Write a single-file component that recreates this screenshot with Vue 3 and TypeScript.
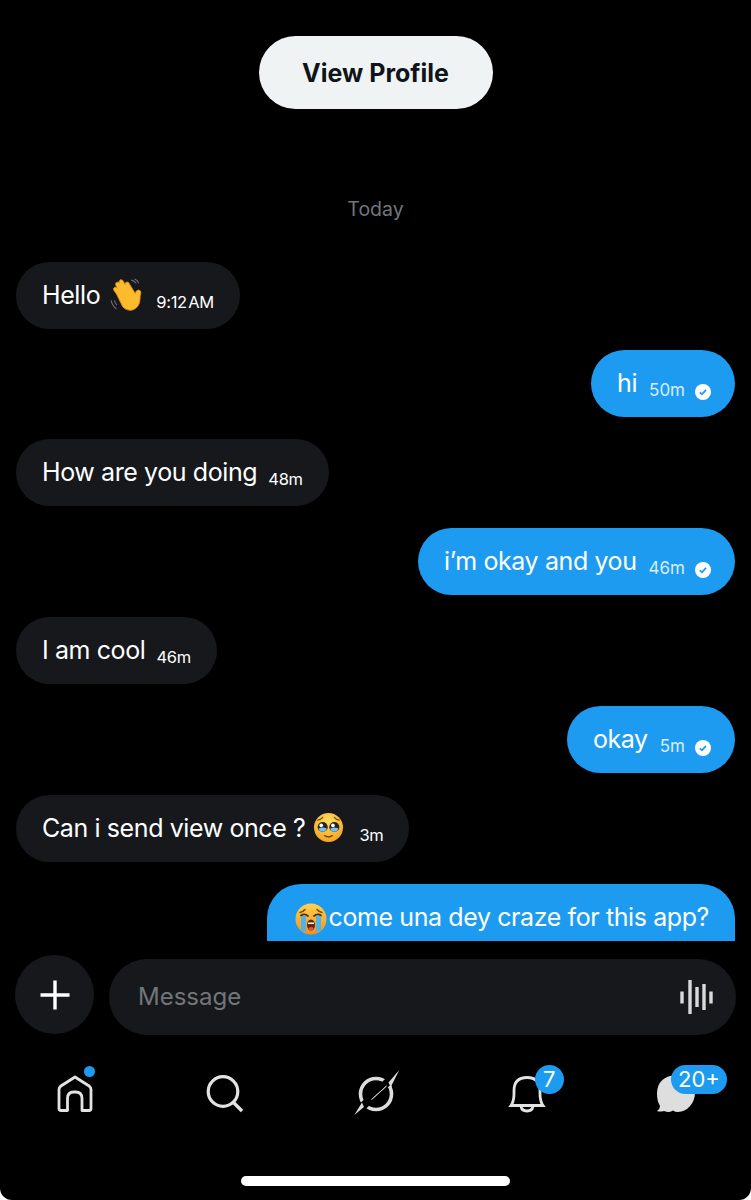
<script setup lang="ts">
type Msg = { id: number; side: 'in' | 'out'; text: string; time: string; emoji?: 'wave' | 'plead' }

const messages: Msg[] = [
  { id: 1, side: 'in', text: 'Hello', emoji: 'wave', time: '9:12 AM' },
  { id: 2, side: 'out', text: 'hi', time: '50m' },
  { id: 3, side: 'in', text: 'How are you doing', time: '48m' },
  { id: 4, side: 'out', text: 'i’m okay and you', time: '46m' },
  { id: 5, side: 'in', text: 'I am cool', time: '46m' },
  { id: 6, side: 'out', text: 'okay', time: '5m' },
  { id: 7, side: 'in', text: 'Can i send view once ?', emoji: 'plead', time: '3m' },
]
</script>

<template>
  <div class="screen">
    <div class="thread">
      <button class="profile-btn">View Profile</button>
      <div class="day">Today</div>

      <div class="messages">
        <div v-for="m in messages" :key="m.id" class="row" :class="m.side">
          <div class="bubble">
            <span class="text">{{ m.text }}</span>

            <svg v-if="m.emoji === 'wave'" class="emoji wave" viewBox="0 0 32 32">
              <path d="M2 21q1 5 5 8M5 21q.7 2.500 2.500 4.500" fill="none" stroke="#6f7378" stroke-width="1" />
              <path d="M21 2q3 .6 4.500 3M24 1q3 1 4 4" fill="none" stroke="#6f7378" stroke-width="1" />
              <path d="M7 15 4.500 11.500q-1-2 .8-2.800 1.500-.5 2.500 1L6.500 7q-1-2 .8-3 1.700-.6 2.700 1L9.500 4.500q-.5-2 1.300-2.800 1.800-.5 2.700 1.300l1.500 3q0-2 1.800-2.200 2-.2 2.400 1.800l5.500 9q.5-3 3-3.300 2.500.2 2.300 3-1 3-.8 6-.5 7-6.200 9.500-5.500 2-10-2.500z" fill="#fdbb2d" stroke="#d98a10" stroke-width=".8" />
            </svg>
            <svg v-if="m.emoji === 'plead'" class="emoji plead" viewBox="0 0 32 32">
              <defs>
                <radialGradient id="face" cx=".5" cy=".3" r=".8">
                  <stop offset="0" stop-color="#ffdf5e" />
                  <stop offset="1" stop-color="#f59a1c" />
                </radialGradient>
              </defs>
              <circle cx="16" cy="16" r="15" fill="url(#face)" />
              <circle cx="10" cy="15.500" r="5.200" fill="#2a2320" />
              <circle cx="22" cy="15.500" r="5.200" fill="#2a2320" />
              <path d="M5.800 17a4.300 4.300 0 0 0 8.400 0q-4-2-8.400 0zM17.800 17a4.300 4.300 0 0 0 8.400 0q-4-2-8.400 0z" fill="#6ec6f0" />
              <circle cx="8.500" cy="13.800" r="1.900" fill="#fff" />
              <circle cx="20.500" cy="13.800" r="1.900" fill="#fff" />
              <path d="M5 8.500q3-.5 5-3M27 8.500q-3-.5-5-3" fill="none" stroke="#7a4a12" stroke-width="1.300" stroke-linecap="round" />
              <path d="M12 24.500q4 2.500 8 0" fill="none" stroke="#7a4a12" stroke-width="1.500" stroke-linecap="round" />
            </svg>

            <span class="time">{{ m.time }}</span>

            <svg v-if="m.side === 'out'" class="seen" viewBox="0 0 16 16">
              <circle cx="8" cy="8" r="8" fill="#fff" />
              <path d="M4.800 8.300 7 10.300 11 5.900" fill="none" stroke="#1d9bf0" stroke-width="1.800" />
            </svg>
          </div>
        </div>

        <div class="row out">
          <div class="bubble last">
            <svg class="emoji cry" viewBox="0 0 32 32">
              <defs>
                <linearGradient id="cryface" x1="0" y1="0" x2="0" y2="1">
                  <stop offset="0" stop-color="#ffd34e" />
                  <stop offset="1" stop-color="#f58f1e" />
                </linearGradient>
              </defs>
              <circle cx="16" cy="16" r="15.500" fill="url(#cryface)" />
              <path d="M5 9.500q3-.5 5-3M27 9.500q-3-.5-5-3" fill="none" stroke="#7a4a12" stroke-width="1.500" stroke-linecap="round" />
              <path d="M6 12.500q3.500-2.500 7 .5M19 13q3.500-3 7-.5" fill="none" stroke="#4a2c10" stroke-width="1.800" stroke-linecap="round" />
              <path d="M6 13h5v15q-2.500 1.500-5-1zM21 13h5v14q-2.500 2.500-5 1z" fill="#4eb5ea" />
              <ellipse cx="16" cy="22" rx="4" ry="5.500" fill="#5b2a10" />
              <path d="M13 19.500h6v1.500h-6z" fill="#fff" />
              <ellipse cx="16" cy="25.500" rx="2.500" ry="1.500" fill="#e0564a" />
            </svg>
            <span class="text">come una dey craze for this app?</span>
          </div>
        </div>
      </div>
    </div>

    <div class="composer">
      <button class="add">
        <svg viewBox="0 0 32 32" width="32" height="32">
          <path d="M16 1.500v29M1.500 16h29" stroke="#fff" stroke-width="3.400" />
        </svg>
      </button>
      <div class="input">
        <span class="placeholder">Message</span>
        <svg class="voice" viewBox="0 0 34 34" width="34" height="34">
          <path d="M2 11.500v12M10 0v34M17 7v20M24 4v26M31 11.500v12" stroke="#d9d9d9" stroke-width="3.400" fill="none" />
        </svg>
      </div>
    </div>

    <nav class="tabs">
      <div class="tab">
        <svg viewBox="0 0 38 38" width="38" height="38">
          <path d="M3 33.500V14.500q0-2 1.500-3.200L19 2l14.500 9.300q1.500 1.200 1.500 3.200v19q0 2-2 2h-7V23.500q0-6.500-6.500-6.500H18q-6.500 0-6.500 6.500V35.500H5q-2 0-2-2z" fill="none" stroke="#e3e3e3" stroke-width="2.800" stroke-linejoin="round" />
        </svg>
        <span class="dot"></span>
      </div>
      <div class="tab">
        <svg viewBox="0 0 38 38" width="38" height="38">
          <circle cx="17" cy="16.500" r="14.800" fill="none" stroke="#e3e3e3" stroke-width="3.200" />
          <path d="M27 27l9 9" stroke="#e3e3e3" stroke-width="3.400" />
        </svg>
      </div>
      <div class="tab">
        <svg viewBox="0 0 48 48" width="48" height="48">
          <circle cx="24" cy="24" r="15.500" fill="none" stroke="#dcdcdc" stroke-width="3.600" />
          <path d="M47 1 2 45" stroke="#000" stroke-width="8" />
          <path d="M47.300 0 39.500 15.500 40 20 36.500 12.500zM2.300 45 10 32.500 12 37z" fill="#dcdcdc" />
          <path d="M34.500 16 19.500 29.500 27 23z" fill="#dcdcdc" stroke="#dcdcdc" stroke-width=".8" />
        </svg>
      </div>
      <div class="tab bell">
        <svg viewBox="0 0 38 38" width="38" height="38">
          <path d="M3 30.500q3-4 3-12v-3q0-13 13-13t13 13v3q0 8 3 12z" fill="none" stroke="#e3e3e3" stroke-width="2.800" stroke-linejoin="miter" />
          <path d="M13 31q.5 5 6 5t6-5" fill="none" stroke="#e3e3e3" stroke-width="2.800" />
        </svg>
        <span class="badge count">7</span>
      </div>
      <div class="tab">
        <svg viewBox="0 0 40 40" width="40" height="40">
          <path d="M21 1c11 0 18 8 18 18S31 38 22 38q-3 0-5-1.500Q14 39 8 37q-4 1-7 0 3-2 3-5Q1 27 1 20 1 2 21 1z" fill="#dedede" />
        </svg>
        <span class="badge wide">20+</span>
      </div>
    </nav>

    <div class="home-indicator"></div>
  </div>
</template>

<style>
html,
body {
  background: #fff;
}
</style>

<style scoped>
.screen {
  width: 751px;
  height: 1200px;
  background: #000;
  border-radius: 0 0 12px 12px;
  overflow: hidden;
  display: flex;
  flex-direction: column;
  font-family: Inter, 'Liberation Sans', sans-serif;
  color: #e7e9ea;
}

.thread {
  height: 941px;
  overflow: hidden;
  flex: none;
  display: flex;
  flex-direction: column;
  align-items: center;
  padding-top: 36px;
  box-sizing: border-box;
}

.profile-btn {
  flex: none;
  width: 234px;
  height: 73px;
  border: none;
  border-radius: 37px;
  background: #eff3f4;
  color: #0f1419;
  font-family: inherit;
  font-size: 25px;
  font-weight: 700;
}

.day {
  flex: none;
  margin-top: 88px;
  height: 24px;
  line-height: 24px;
  font-size: 19.500px;
  color: #71767b;
}

.messages {
  flex: none;
  align-self: stretch;
  margin-top: 40px;
  padding: 0 16px;
  display: flex;
  flex-direction: column;
  gap: 22px;
}

.row {
  display: flex;
}

.row:first-child {
  margin-top: 1px;
  margin-bottom: -1px;
}

.row.out {
  justify-content: flex-end;
}

.bubble {
  height: 67px;
  box-sizing: border-box;
  padding: 0 26px;
  border-radius: 34px;
  display: flex;
  align-items: center;
}

.in .bubble {
  background: #16181c;
  color: #fff;
}

.out .bubble {
  background: #1d9bf0;
  color: #fff;
  padding-right: 24px;
}

.text {
  font-size: 25px;
  letter-spacing: -0.4px;
  line-height: 32px;
  margin-top: -2px;
}

.time {
  font-size: 16.500px;
  letter-spacing: -0.3px;
  line-height: 20px;
  word-spacing: -3px;
  margin-left: 11px;
  margin-top: 13px;
  white-space: nowrap;
}

.out .time {
  color: #d8eefc;
  font-size: 17px;
  letter-spacing: 0;
  margin-left: 12px;
}

.seen {
  width: 16px;
  height: 16px;
  margin-left: 10px;
  margin-top: 16px;
}

.emoji {
  flex: none;
}

.wave {
  width: 34px;
  height: 34px;
  margin-left: 9px;
  margin-right: 2px;
  margin-top: -2px;
}

.plead {
  width: 31px;
  height: 31px;
  margin-left: 8px;
  margin-right: 4px;
  margin-top: -3px;
}

.bubble.last {
  border-radius: 34px 34px 0 0;
  padding: 0 26px 0 28px;
}

.cry {
  width: 32px;
  height: 32px;
  margin-right: 2px;
  margin-top: 2px;
}

.composer {
  flex: none;
  display: flex;
  align-items: flex-start;
  gap: 15px;
  padding: 14px 15px 0;
}

.add {
  width: 79px;
  height: 79px;
  flex: none;
  border: none;
  padding: 0;
  border-radius: 50%;
  background: #16181c;
  display: flex;
  align-items: center;
  justify-content: center;
}

.input {
  flex: 1;
  height: 76px;
  margin-top: 4px;
  border-radius: 38px;
  background: #16181c;
  display: flex;
  align-items: center;
  justify-content: space-between;
  padding: 0 22px 0 29px;
}

.placeholder {
  font-size: 24px;
  margin-top: -2px;
  color: #71767b;
}

.tabs {
  flex: none;
  display: flex;
  justify-content: space-between;
  align-items: center;
  padding: 0 56px;
  margin-top: 36px;
  height: 46px;
}

.tab {
  position: relative;
  width: 38px;
  height: 38px;
  display: flex;
  align-items: center;
  justify-content: center;
}

.tab.bell {
  left: 1px;
}

.tab svg {
  flex: none;
}

.dot {
  position: absolute;
  top: -9px;
  right: -1px;
  width: 11px;
  height: 11px;
  border-radius: 50%;
  background: #1d9bf0;
}

.badge {
  position: absolute;
  background: #1d9bf0;
  color: #fff;
  font-size: 22px;
  line-height: 29px;
  height: 29px;
  border-radius: 15px;
  text-align: center;
}

.count {
  top: -10px;
  right: -18px;
  width: 29px;
}

.wide {
  top: -10px;
  right: -32px;
  width: 56px;
}

.home-indicator {
  flex: none;
  width: 269px;
  height: 10px;
  border-radius: 5px;
  background: #fff;
  margin: 59px auto 0;
}
</style>
